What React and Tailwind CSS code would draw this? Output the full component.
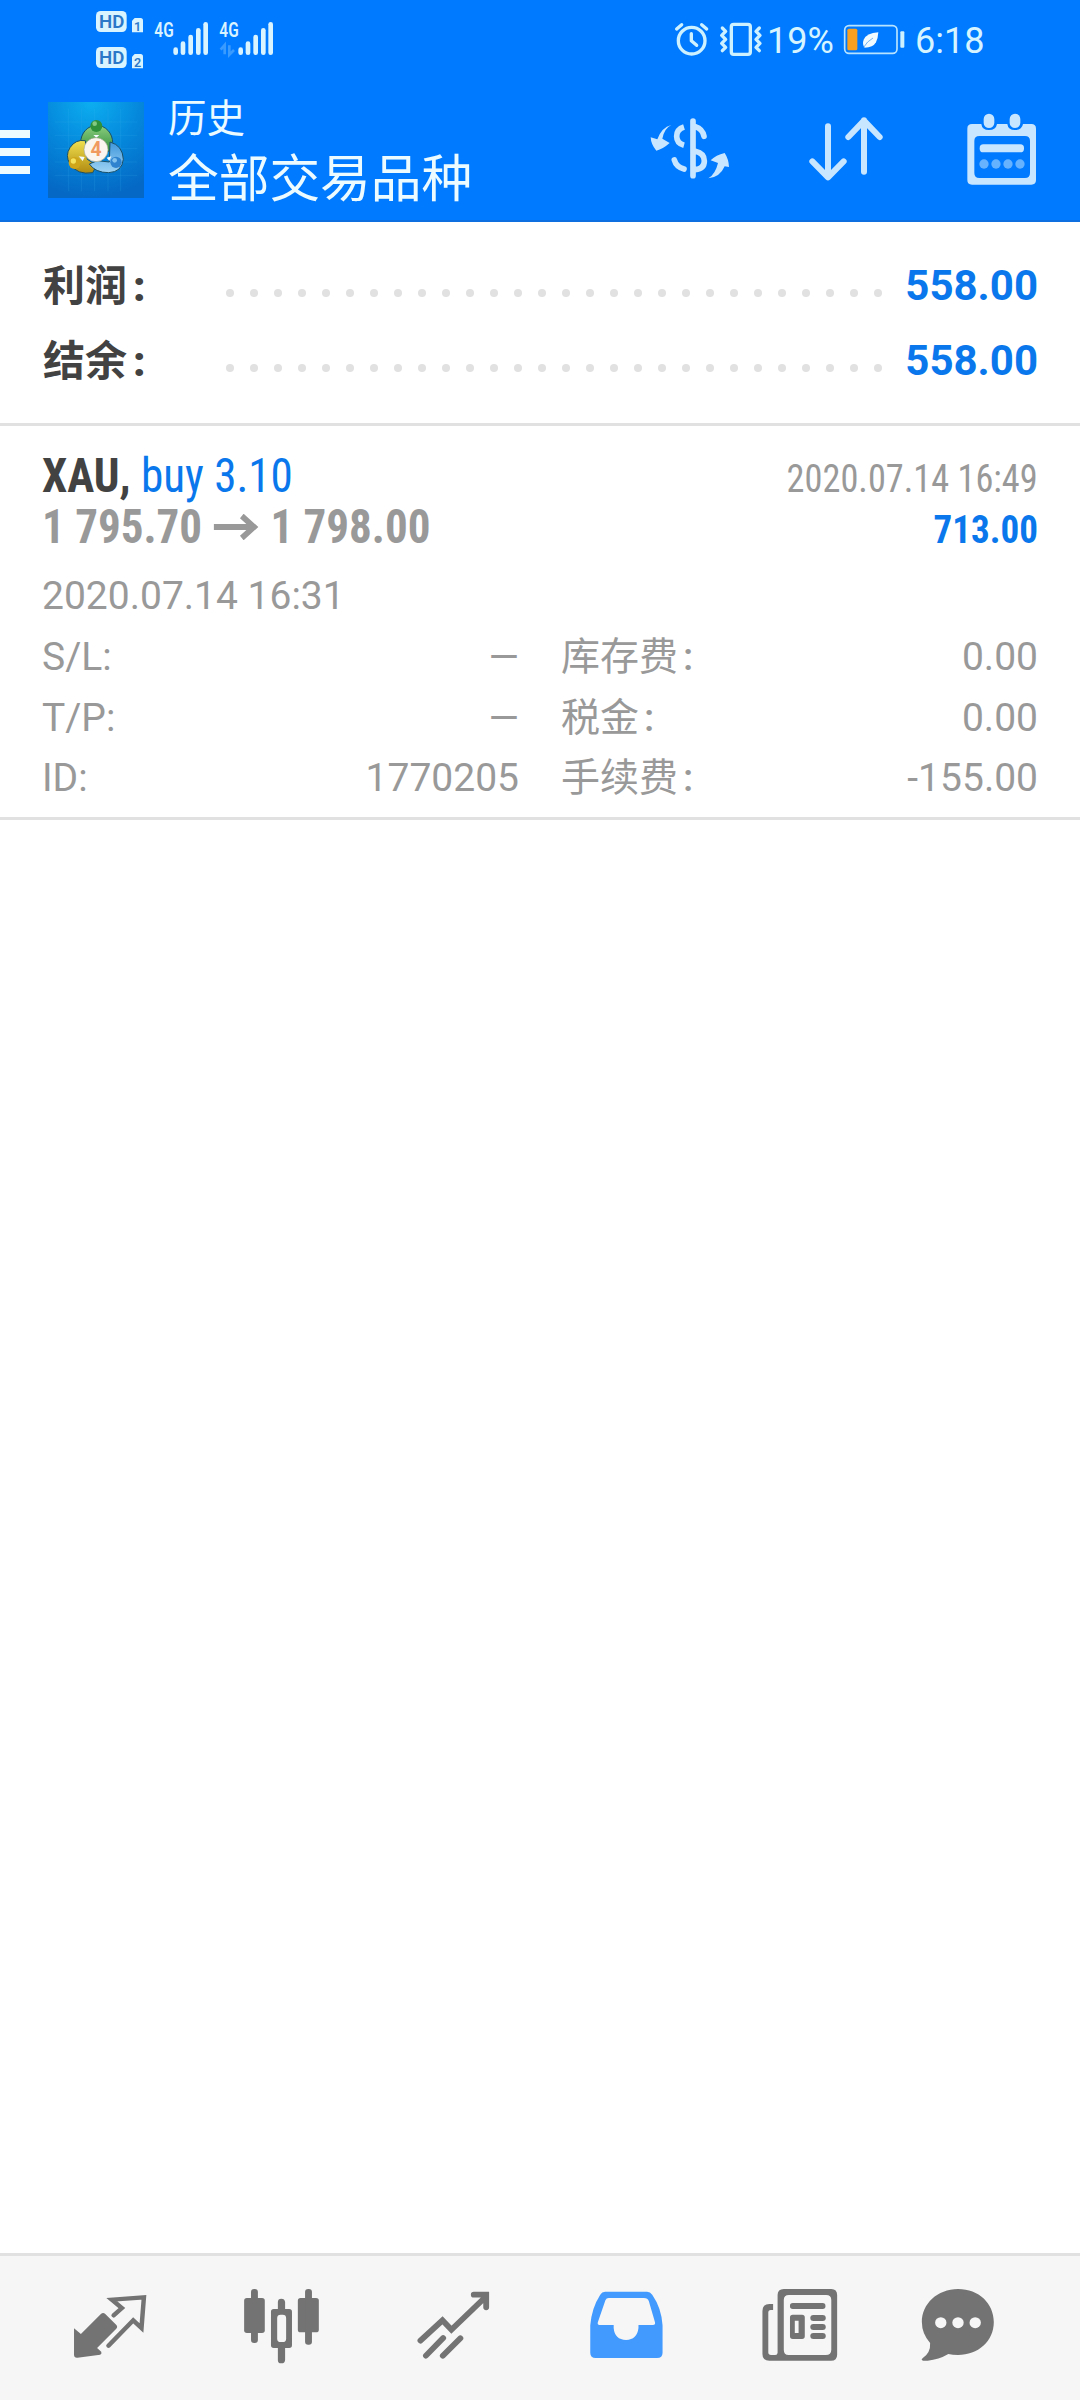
const totals = [
  { label: '利润', value: '558.00' },
  { label: '结余', value: '558.00' },
];

const details = [
  [
    { label: 'S/L:', value: '—' },
    { label: 'T/P:', value: '—' },
    { label: 'ID:', value: '1770205' },
  ],
  [
    { label: '库存费', wide: true, value: '0.00' },
    { label: '税金', wide: true, value: '0.00' },
    { label: '手续费', wide: true, value: '-155.00' },
  ],
];

const bars = [
  [280, 142], [302, 124], [325, 104], [348, 84], [370, 66],
  [475, 142], [497, 124], [520, 104], [543, 84], [565, 66],
];

function SignalIcons() {
  return (
    <svg className="w-[220px] h-20" viewBox="0 0 660 240" fill="#d9f3ff">
      <rect x="48" y="33" width="92" height="63" rx="14" />
      <rect x="48" y="141" width="92" height="63" rx="14" />
      <path d="M164 54h18q7 0 7 8v35h-33V62z" />
      <path d="M164 162h18q7 0 7 8v35h-33v-35z" />
      <g fontFamily="Roboto" fontWeight="600" fill="#2b78c8" textAnchor="middle">
        <text x="95" y="84" fontSize="54" textLength="76" lengthAdjust="spacingAndGlyphs">HD</text>
        <text x="95" y="192" fontSize="54" textLength="76" lengthAdjust="spacingAndGlyphs">HD</text>
        <text x="173" y="92" fontSize="38">1</text>
        <text x="173" y="200" fontSize="38">2</text>
      </g>
      <g fontFamily="Roboto" fontWeight="600" fontSize="60">
        <text x="223" y="110" textLength="58" lengthAdjust="spacingAndGlyphs">4G</text>
        <text x="418" y="110" textLength="58" lengthAdjust="spacingAndGlyphs">4G</text>
      </g>
      {bars.map(([x, y]) => (
        <rect key={x} x={x} y={y} width="14" height={165 - y} rx="7" />
      ))}
      <path d="M422 149l12-14v28M448 136v28l14-14" fill="none" stroke="#3a9bff" strokeWidth="8" />
    </svg>
  );
}

function AlarmIcons() {
  return (
    <svg className="w-[92px] h-20" viewBox="36 0 276 240" fill="none" stroke="#cdf1ff" strokeWidth="10" strokeLinecap="round" strokeLinejoin="round">
      <circle cx="95" cy="122" r="40" />
      <path d="M94 101v21l16 14" />
      <path d="M50 87l15-13M125 74l15 13" />
      <rect x="214" y="73" width="57" height="90" rx="7" />
      <path d="M187 84l10 10-12 12 12 12-12 12 12 12-10 10M298 84l-10 10 12 12-12 12 12 12-12 12 10 10" />
    </svg>
  );
}

function BatteryIcon() {
  return (
    <svg className="w-[64px] h-20" viewBox="549 0 192 240">
      <rect x="554" y="77" width="157" height="83" rx="13" fill="none" stroke="#b9e4ff" strokeWidth="5" />
      <rect x="562" y="86" width="30" height="65" rx="5" fill="#f9a020" />
      <rect x="721" y="94" width="12" height="49" rx="3" fill="#cdf1ff" />
      <path d="M655 97q-36 3-44 22-5 13 3 24 25 0 34-16 6-12 7-30z" fill="#f0fbff" />
      <path d="M611 142q10-18 28-28" fill="none" stroke="#3b8fe8" strokeWidth="2" />
    </svg>
  );
}

function AppLogo() {
  return (
    <svg className="w-24 h-24" viewBox="0 0 288 288">
      <defs>
        <radialGradient id="sky" cx="0.45" cy="0" r="1">
          <stop offset="0" stopColor="#0caef0" />
          <stop offset="0.5" stopColor="#0588dc" />
          <stop offset="1" stopColor="#0468c4" />
        </radialGradient>
        <linearGradient id="green" x1="0" y1="0" x2="0" y2="1">
          <stop offset="0" stopColor="#8cd080" />
          <stop offset="1" stopColor="#2f8a3a" />
        </linearGradient>
        <linearGradient id="gold" x1="0" y1="0" x2="0" y2="1">
          <stop offset="0" stopColor="#f0e050" />
          <stop offset="1" stopColor="#b08a10" />
        </linearGradient>
        <linearGradient id="azure" x1="0" y1="0" x2="0" y2="1">
          <stop offset="0" stopColor="#3d96dc" />
          <stop offset="1" stopColor="#a0d4f4" />
        </linearGradient>
      </defs>
      <rect width="288" height="288" fill="url(#sky)" />
      <path d="M62 20v248M100 20v248M140 20v248M180 20v248M218 20v248M20 60h248M20 100h248M20 140h248M20 180h248M20 220h248" stroke="#3cb0ec" strokeOpacity="0.18" strokeWidth="3" />
      <g stroke="#1a5068" strokeWidth="3">
        <path d="M98 122a48 52 0 0 1 96 0q0 22-20 30l-26-44-26 40q-24-6-24-26z" fill="url(#green)" />
        <path d="M112 116a46 46 0 0 0-46 70q22 34 68 26l12-22-28-18z" fill="url(#gold)" />
        <path d="M186 120q38 10 40 52-4 38-44 40-40 0-58-26l24-10 36 4z" fill="url(#azure)" />
      </g>
      <circle cx="145" cy="72" r="18" fill="#2f913a" />
      <circle cx="140" cy="65" r="7" fill="#83c982" />
      <circle cx="80" cy="183" r="18" fill="#cfa51a" />
      <circle cx="76" cy="177" r="8" fill="#f4e25c" />
      <circle cx="204" cy="181" r="17" fill="#2f83cf" />
      <circle cx="200" cy="175" r="7" fill="#83c2ee" />
      <path d="M92 163l18 2-6 12zM190 163l-14 4 8 10zM136 99h18l-9 8z" fill="#f4fbff" />
      <circle cx="144" cy="143" r="36" fill="#fbf5f0" stroke="#a0a890" strokeWidth="2" />
      <text x="144" y="163" textAnchor="middle" fontFamily="Roboto" fontSize="58" fontWeight="700" fill="#f09a60">4</text>
    </svg>
  );
}

function CurrencyIcon() {
  return (
    <svg className="w-[84px] h-[66px]" viewBox="84 77 252 198" fill="none" stroke="#c8e6ff" strokeWidth="17">
      <path d="M192 110q-22 7-22 28t22 27" />
      <path d="M192 236q-23-6-29-27M252 138q-4-22-26-29M226 183q27 6 27 29 0 23-27 26M219 92v164" strokeLinecap="round" />
      <path d="M154 104q-21 10-27 41l22 13q-20 18-40 23-16-18-17-40l20 6q13-36 42-43zM265 264q21-12 29-46l-22-8q16-16 42-22 12 18 13 42l-13-2q-14 33-49 36z" fill="#c8e6ff" stroke="none" />
    </svg>
  );
}

function SortIcon() {
  return (
    <svg className="w-[76px] h-[66px]" viewBox="564 79 228 198" fill="none" stroke="#c8e6ff" strokeWidth="18" strokeLinecap="round" strokeLinejoin="round">
      <path d="M624 110v152M577 215l47 48 47-48M732 246V92M685 142l47-49 47 49" />
    </svg>
  );
}

function CalendarIcon() {
  return (
    <svg className="w-[70px] h-[74px]" viewBox="1041 65 210 222" fill="#c8e6ff">
      <path fillRule="evenodd" d="M1056 101h28q2 18 23 18t24-18h31q2 18 23 18t24-18h25q14 0 14 14v154q0 14-14 14h-178q-14 0-14-14V115q0-14 14-14zM1078 137q-15 0-15 15v96q0 15 15 15h137q15 0 15-15v-96q0-15-15-15z" />
      <rect x="1091" y="70" width="32" height="43" rx="16" />
      <rect x="1169" y="70" width="32" height="43" rx="16" />
      <rect x="1079" y="162" width="133" height="24" rx="11" />
      <g fill="#66b2ff">
        <circle cx="1092" cy="221" r="14" />
        <circle cx="1128" cy="221" r="14" />
        <circle cx="1164" cy="221" r="14" />
        <circle cx="1200" cy="221" r="14" />
      </g>
    </svg>
  );
}

function NavIcon({ viewBox, className = '', children }) {
  return (
    <svg className={`w-[84px] h-[84px] shrink-0 ${className}`} viewBox={viewBox} preserveAspectRatio="none" fill="#737373">
      {children}
    </svg>
  );
}

function BottomNav() {
  return (
    <nav className="h-[147px] shrink-0 border-t-3 border-[#e1e1e1] bg-[#f6f6f6] pl-[68px] pt-[26px] flex items-start gap-[88px]">
      <NavIcon viewBox="197.5 156 244 252">
        <path d="M215 295l20 17 58-60q6-6 12-1l33 34q5 6-1 12l-55 57 12 11q3 6-3 9l-66 9q-10 1-10-9z" />
        <path d="M330 256l24-22-29-25 93-7-7 92-24-23-72 76" fill="none" stroke="#737373" strokeWidth="13" strokeLinecap="round" strokeLinejoin="miter" />
      </NavIcon>
      <NavIcon viewBox="697 156 244 252">
        <rect x="709" y="204" width="60" height="105" rx="8" />
        <rect x="729" y="177" width="20" height="162" rx="9" />
        <rect x="865" y="204" width="61" height="103" rx="8" />
        <rect x="886" y="177" width="20" height="167" rx="9" />
        <path fillRule="evenodd" d="M807 237v-21q0-10 10-10t11 10v21h12q8 0 8 8v101q0 8-8 8h-12v35q0 11-11 11t-10-11v-35h-12q-8 0-8-8V245q0-8 8-8zM815 254q-10 0-10 10v62q0 10 10 10h6q10 0 10-10v-62q0-10-10-10z" />
      </NavIcon>
      <NavIcon viewBox="1196.5 156 244 252">
        <path d="M1221 332l64-61 26 28 99-98M1376 194h36v38M1237 377l50-53M1286 377l51-52" fill="none" stroke="#737373" strokeWidth="17" strokeLinecap="round" strokeLinejoin="miter" />
      </NavIcon>
      <NavIcon viewBox="127.8 156 244 252">
        <path fill="#429aff" fillRule="evenodd" d="M189 185h122q9 0 15 9 27 40 30 92v82q0 16-16 16H162q-16 0-16-16v-82q4-52 29-92 5-9 14-9zM199 204q-6 0-9 7l-22 66q-2 8 5 8h41v9q3 35 36 36 32-1 36-36v-9h42q8 0 6-8l-18-64q-3-9-14-9z" />
      </NavIcon>
      <NavIcon viewBox="627.3 156 244 252">
        <path fillRule="evenodd" d="M708 177h138q17 0 17 18v179q0 18-18 18H666q-20 0-20-20V243q0-21 20-21h11v18h-7q-7 0-7 8v119q0 8 8 8h12q7 0 7-7V195q0-18 18-18zM723 195q-15 0-15 15v149q0 16 14 16h108q16 0 16-16V210q0-15-15-15z" />
        <rect x="726" y="219" width="103" height="18" rx="8" />
        <path fillRule="evenodd" d="M734 254h27q8 0 8 8v57q0 8-8 8h-27q-8 0-8-8v-57q0-8 8-8zM740 272v37h11v-37z" />
        <rect x="785" y="255" width="45" height="18" rx="9" />
        <rect x="785" y="282" width="45" height="18" rx="9" />
        <rect x="785" y="309" width="45" height="18" rx="9" />
      </NavIcon>
      <NavIcon className="-ml-3" viewBox="1092 156 244 252">
        <path d="M1214 177c61 0 104 44 104 99 0 58-46 99-104 99q-16 0-28-3-28 17-60 20h-13q-8-1-2-7 24-17 22-46-24-28-24-63c0-54 45-99 105-99z" />
        <g fill="#f6f6f6">
          <circle cx="1164" cy="278" r="16.500" />
          <circle cx="1214" cy="278" r="16.500" />
          <circle cx="1264" cy="278" r="16.500" />
        </g>
      </NavIcon>
    </nav>
  );
}

export default function App() {
  return (
    <div className="w-[1080px] h-[2400px] flex flex-col bg-white font-['Roboto','Noto_Sans_CJK_SC',sans-serif] whitespace-nowrap overflow-hidden">
      <header className="h-[222px] shrink-0 bg-[#007aff] border-b-2 border-[#0d6fe0] text-[#ecfbff]">
        <div className="h-20 flex pl-20">
          <SignalIcons />
          <div className="ml-[372px] flex text-[36px] leading-[82px] text-[#d5f4ff]">
            <AlarmIcons />
            <span className="w-[79px] pl-[3px]">19%</span>
            <BatteryIcon />
            <span className="ml-2">6:18</span>
          </div>
        </div>
        <div className="flex h-[140px]">
          <div className="w-[30px] pt-[50px] flex flex-col gap-2.5">
            <span className="h-2 bg-[#ecfbff]" />
            <span className="h-2 bg-[#ecfbff]" />
            <span className="h-2 bg-[#ecfbff]" />
          </div>
          <div className="ml-[18px] pt-[22px]">
            <AppLogo />
          </div>
          <div className="ml-6 pt-3.5 w-[480px]">
            <div className="text-[38.500px] leading-[50px]">历史</div>
            <div className="mt-1.5 text-[50.700px] leading-[60px]">全部交易品种</div>
          </div>
          <div className="pt-9">
            <CurrencyIcon />
          </div>
          <div className="ml-[76px] pt-9">
            <SortIcon />
          </div>
          <div className="ml-[83px] pt-8">
            <CalendarIcon />
          </div>
        </div>
      </header>

      <section className="h-[204px] shrink-0 border-b-3 border-[#e1e1e1] pt-[26px] px-[42px]">
        {totals.map((row) => (
          <div key={row.label} className="flex items-center h-[75px] leading-[75px] text-[42px] font-bold">
            <span className="w-[184px] pt-0.5 pl-px text-[#424242]">
              {row.label}
              <span className="ml-1.5 font-black">:</span>
            </span>
            <span className="w-[656px] mt-3.5 flex justify-between">
              {Array.from({ length: 28 }, (_, i) => (
                <i key={i} className="size-2 rounded-full bg-[#e1e1e1]" />
              ))}
            </span>
            <span className="ml-auto text-[#0a78ec]">{row.value}</span>
          </div>
        ))}
      </section>

      <section className="h-[394px] shrink-0 border-b-3 border-[#e1e1e1] pt-6 px-[42px] text-[39px] text-[#999]">
        <div className="font-['Roboto_Condensed','Roboto',sans-serif] [font-stretch:75%]">
          <div className="flex justify-between items-baseline h-[51px] leading-[51px]">
            <div className="text-[48px] origin-left scale-x-[0.94]">
              <b className="text-[#424242]">XAU,</b> <span className="text-[#0a78ec]">buy 3.10</span>
            </div>
            <div className="origin-right scale-x-[0.931]">2020.07.14 16:49</div>
          </div>
          <div className="flex justify-between items-baseline h-[51px] leading-[51px] font-bold">
            <div className="text-[48px] flex items-center origin-left scale-x-[0.938]">
              1 795.70
              <svg className="w-[48px] h-[26px] ml-3 mr-[13px]" viewBox="0 0 48 26" fill="none" stroke="#999" strokeWidth="6">
                <path d="M0 13h44M30 2l13 11-13 11" />
              </svg>
              1 798.00
            </div>
            <div className="text-[#0a78ec] origin-right scale-x-[0.95]">713.00</div>
          </div>
        </div>
        <div className="mt-3.5 leading-[60px]">2020.07.14 16:31</div>
        <div className="mt-px flex gap-[42px] leading-[60.700px]">
          {details.map((column, i) => (
            <div key={i} className="flex-1">
              {column.map((item) => (
                <div key={item.label} className="flex justify-between">
                  <span>
                    {item.label}
                    {item.wide && <span className="ml-[5px] font-medium">:</span>}
                  </span>
                  <span>{item.value}</span>
                </div>
              ))}
            </div>
          ))}
        </div>
      </section>

      <main className="flex-1" />
      <BottomNav />
    </div>
  );
}
